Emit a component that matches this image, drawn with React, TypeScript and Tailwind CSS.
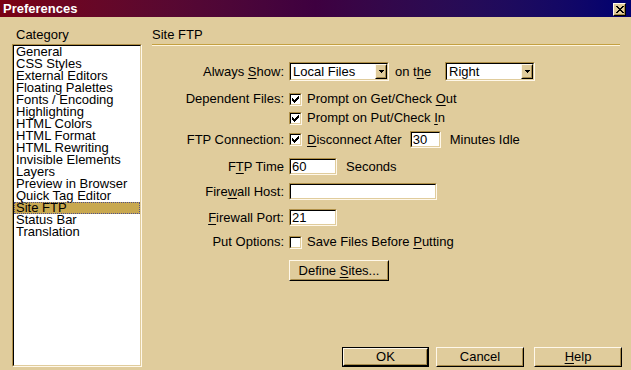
import type { ReactNode } from 'react';

const categories = [
  'General',
  'CSS Styles',
  'External Editors',
  'Floating Palettes',
  'Fonts / Encoding',
  'Highlighting',
  'HTML Colors',
  'HTML Format',
  'HTML Rewriting',
  'Invisible Elements',
  'Layers',
  'Preview in Browser',
  'Quick Tag Editor',
  'Site FTP',
  'Status Bar',
  'Translation',
];

// two-tone sunken frame (fields, list, checkbox)
function Sunken({ className = '', children }: { className?: string; children?: ReactNode }) {
  return (
    <div className={`border border-t-[#b09048] border-l-[#b09048] border-b-[#fff8ea] border-r-[#fff8ea] ${className}`}>
      <div className="w-full h-full border border-t-black border-l-black border-b-[#e0cc9c] border-r-[#e0cc9c] bg-white">
        {children}
      </div>
    </div>
  );
}

function Raised({ className = '', children }: { className?: string; children?: ReactNode }) {
  return (
    <div className={`border border-t-[#fff8ea] border-l-[#fff8ea] border-b-black border-r-black ${className}`}>
      <div className="w-full h-full border border-t-[#e0cc9c] border-l-[#e0cc9c] border-b-[#a88c4c] border-r-[#a88c4c] bg-[#e0cc9c] flex items-center justify-center">
        {children}
      </div>
    </div>
  );
}

function U({ children }: { children: ReactNode }) {
  return <span className="underline underline-offset-2">{children}</span>;
}

function Checkbox({ checked }: { checked?: boolean }) {
  return (
    <Sunken className="w-[13px] h-[13px] shrink-0">
      <div className="w-full h-full flex items-center justify-center">
        {checked && (
          <svg width="7" height="7" viewBox="0 0 7 7" shapeRendering="crispEdges">
            <path
              d="M6 0h1v1H6z M5 1h2v1H5z M0 2h1v1H0z M4 2h3v1H4z M0 3h2v1H0z M3 3h3v1H3z M0 4h5v1H0z M1 5h3v1H1z M2 6h1v1H2z"
              fill="#000"
            />
          </svg>
        )}
      </div>
    </Sunken>
  );
}

function Select({ value, width }: { value: string; width: string }) {
  return (
    <Sunken className={`${width} h-[19px]`}>
      <div className="flex h-full">
        <div className="flex-1 pl-[2px] leading-[15px]">{value}</div>
        <Raised className="w-[12px] h-full">
          <svg width="5" height="3" viewBox="0 0 5 3" shapeRendering="crispEdges">
            <path d="M0 0h5v1H0z M1 1h3v1H1z M2 2h1v1H2z" fill="#000" />
          </svg>
        </Raised>
      </div>
    </Sunken>
  );
}

function Field({ value = '', width }: { value?: string; width: string }) {
  return (
    <Sunken className={`${width} h-[17px]`}>
      <div className="pl-[1px] leading-[13px]">{value}</div>
    </Sunken>
  );
}

function Row({ label, className, children }: { label?: ReactNode; className: string; children: ReactNode }) {
  return (
    <div className={`flex items-center ${className}`}>
      <div className="w-[132px] text-right whitespace-nowrap">{label}</div>
      <div className="ml-[5px] flex items-center whitespace-nowrap">{children}</div>
    </div>
  );
}

export default function App() {
  return (
    <div
      className="w-[631px] h-[370px] bg-[#e0cc9c] overflow-hidden flex flex-col text-[13px] text-black"
      style={{ fontFamily: '"Liberation Sans", Arial, sans-serif' }}
    >
      {/* Title bar */}
      <div className="h-[17px] shrink-0 flex items-center justify-between bg-gradient-to-r from-[#7a0012] via-[#3e0040] to-[#000070] pl-[3px] pr-[5px]">
        <span className="text-white font-bold text-[13px] leading-[15px]">Preferences</span>
        <Raised className="w-[13px] h-[13px] mt-[1px]">
          <svg width="8" height="7" viewBox="0 0 8 7" shapeRendering="crispEdges">
            <path
              d="M0 0h2v1H0z M6 0h2v1H6z M1 1h2v1H1z M5 1h2v1H5z M2 2h4v1H2z M3 3h2v1H3z M2 4h4v1H2z M1 5h2v1H1z M5 5h2v1H5z M0 6h2v1H0z M6 6h2v1H6z"
              fill="#000"
            />
          </svg>
        </Raised>
      </div>

      <div className="flex flex-1">
        {/* Category list */}
        <div className="w-[152px] pl-[12px] pt-[10px] shrink-0">
          <div className="pl-[4px] leading-[15px] mb-[2px]">Category</div>
          <Sunken className="w-[130px] h-[323px]">
            <div className="leading-[12px]">
              {categories.map((c) => (
                <div
                  key={c}
                  className={`h-[12px] pl-[2px] whitespace-nowrap ${
                    c === 'Site FTP' ? 'bg-[#c8a850] outline-dotted outline-1 -outline-offset-1 outline-[#50508a]' : ''
                  }`}
                >
                  {c}
                </div>
              ))}
            </div>
          </Sunken>
        </div>

        {/* Site FTP panel */}
        <div className="flex-1 flex flex-col pt-[10px] pr-[9px]">
          <div className="leading-[15px]">Site FTP</div>
          <div className="w-[468px] mt-[2px] h-px bg-[#c4a040]" />
          <div className="w-[468px] h-px bg-[#fff4dc]" />

          <Row className="mt-[16px] h-[19px]" label={<>Always <U>S</U>how:</>}>
            <Select value="Local Files" width="w-[100px]" />
            <span className="ml-[6px] w-[50px]">
              on t<U>h</U>e
            </span>
            <Select value="Right" width="w-[90px]" />
          </Row>

          <Row className="mt-[12px] h-[12px]" label="Dependent Files:">
            <Checkbox checked />
            <span className="ml-[5px]">
              Prompt on Get/Check <U>O</U>ut
            </span>
          </Row>

          <Row className="mt-[7px] h-[12px]">
            <Checkbox checked />
            <span className="ml-[5px]">
              Prompt on Put/Check <U>I</U>n
            </span>
          </Row>

          <Row className="mt-[7px] h-[17px]" label="FTP Connection:">
            <Checkbox checked />
            <span className="ml-[5px] mr-[8px]">
              <U>D</U>isconnect After
            </span>
            <Field value="30" width="w-[31px]" />
            <span className="ml-[9px]">Minutes Idle</span>
          </Row>

          <Row className="mt-[10px] h-[17px]" label={<>F<U>T</U>P Time</>}>
            <Field value="60" width="w-[48px]" />
            <span className="ml-[9px]">Seconds</span>
          </Row>

          <Row className="mt-[8px] h-[17px]" label={<>Fire<U>w</U>all Host:</>}>
            <Field width="w-[148px]" />
          </Row>

          <Row className="mt-[9px] h-[17px]" label={<><U>F</U>irewall Port:</>}>
            <Field value="21" width="w-[48px]" />
          </Row>

          <Row className="mt-[10px] h-[12px]" label="Put Options:">
            <Checkbox />
            <span className="ml-[5px]">
              Save Files Before <U>P</U>utting
            </span>
          </Row>

          <Row className="mt-[12px] h-[21px]">
            <Raised className="w-[100px] h-[21px]">
              <span>
                Define <U>S</U>ites...
              </span>
            </Raised>
          </Row>

          <div className="flex-1" />

          {/* Dialog buttons */}
          <div className="flex justify-end mb-[3px]">
            <div className="border border-black">
              <Raised className="w-[85px] h-[18px]">OK</Raised>
            </div>
            <Raised className="w-[88px] h-[20px] ml-[7px]">Cancel</Raised>
            <Raised className="w-[88px] h-[20px] ml-[10px]">
              <span>
                <U>H</U>elp
              </span>
            </Raised>
          </div>
        </div>
      </div>
    </div>
  );
}
